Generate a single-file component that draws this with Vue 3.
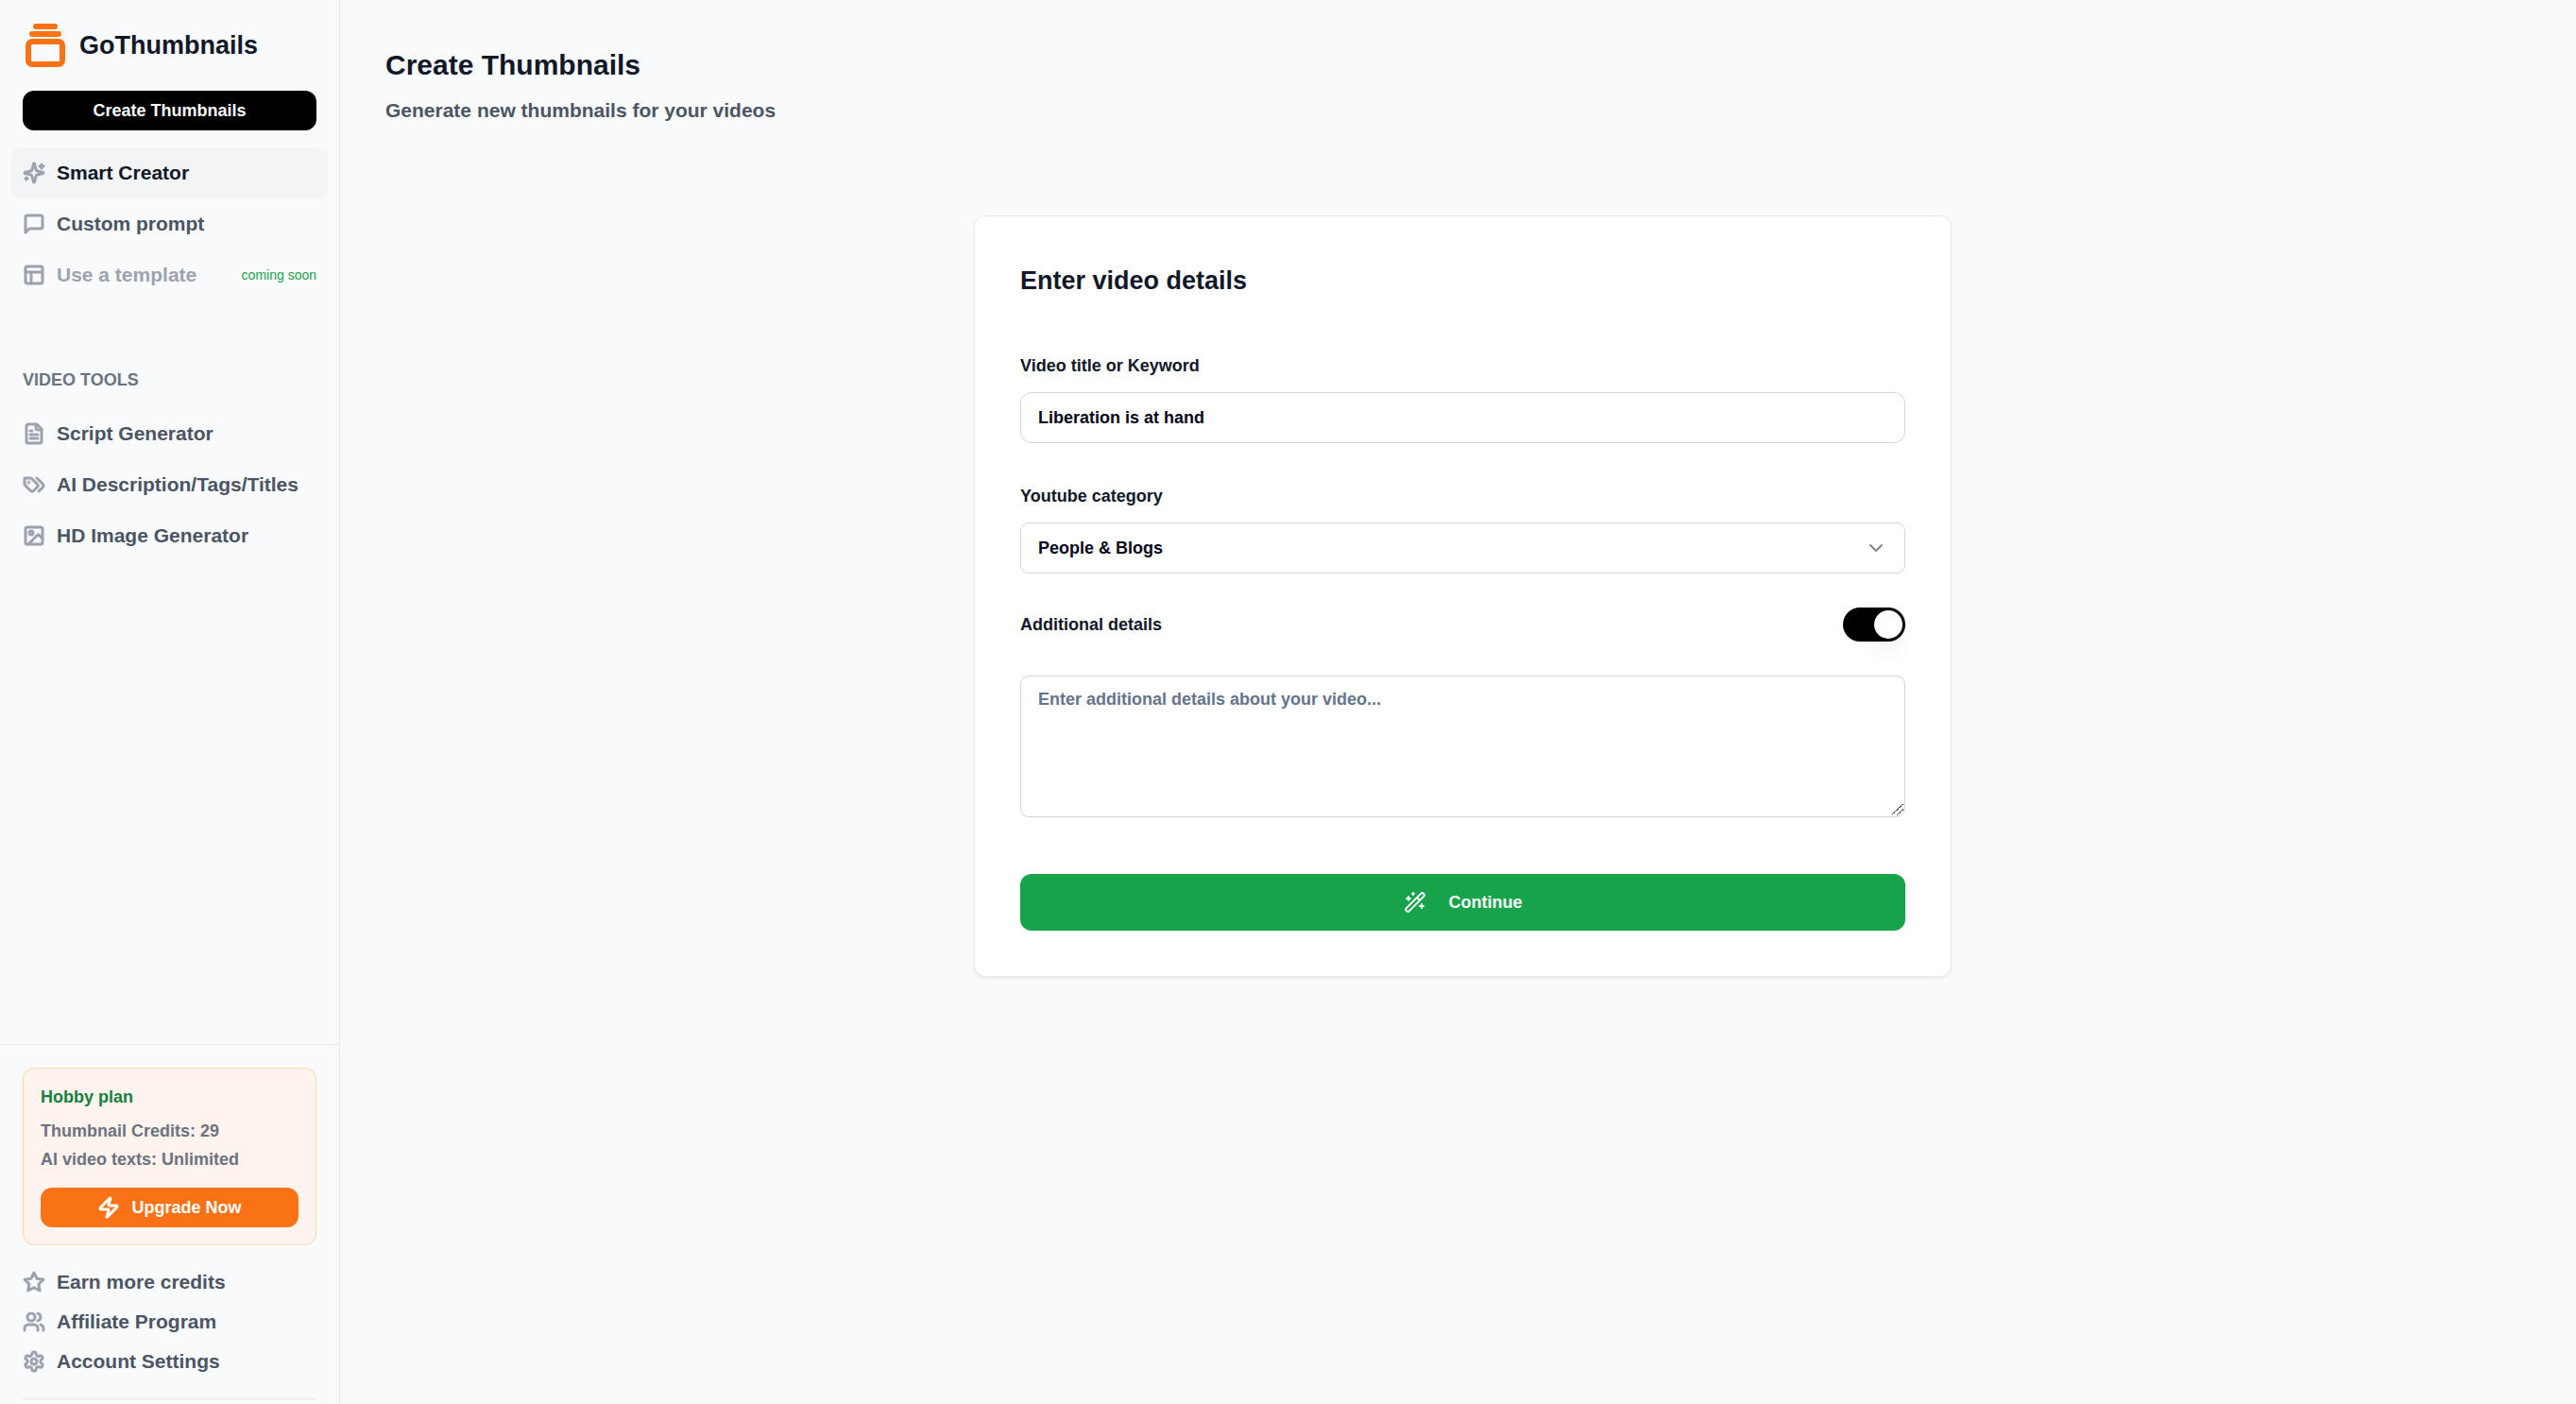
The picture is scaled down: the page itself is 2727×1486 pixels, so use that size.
<script setup>
import { ref } from 'vue'

const icons = {
  sparkles: '<path d="M9.937 15.5A2 2 0 0 0 8.5 14.063l-6.135-1.582a.5.5 0 0 1 0-.962L8.5 9.936A2 2 0 0 0 9.937 8.5l1.582-6.135a.5.5 0 0 1 .963 0L14.063 8.5A2 2 0 0 0 15.5 9.937l6.135 1.581a.5.5 0 0 1 0 .964L15.5 14.063a2 2 0 0 0-1.437 1.437l-1.582 6.135a.5.5 0 0 1-.963 0z"/><path d="M20 3v4M22 5h-4M4 17v2M5 18H3"/>',
  message: '<path d="M21 15a2 2 0 0 1-2 2H7l-4 4V5a2 2 0 0 1 2-2h14a2 2 0 0 1 2 2z"/>',
  layout: '<rect x="3" y="3" width="18" height="18" rx="2"/><path d="M3 9h18M9 21V9"/>',
  file: '<path d="M15 2H6a2 2 0 0 0-2 2v16a2 2 0 0 0 2 2h12a2 2 0 0 0 2-2V7Z"/><path d="M14 2v4a2 2 0 0 0 2 2h4M10 9H8M16 13H8M16 17H8"/>',
  tags: '<path d="m15 5 6.3 6.3a2.4 2.4 0 0 1 0 3.4L17 19"/><path d="M9.586 5.586A2 2 0 0 0 8.172 5H3a1 1 0 0 0-1 1v5.172a2 2 0 0 0 .586 1.414L8.29 18.29a2.426 2.426 0 0 0 3.42 0l3.58-3.58a2.426 2.426 0 0 0 0-3.42z"/><circle cx="6.5" cy="9.5" r=".5" fill="currentColor"/>',
  image: '<rect x="3" y="3" width="18" height="18" rx="2"/><circle cx="9" cy="9" r="2"/><path d="m21 15-3.086-3.086a2 2 0 0 0-2.828 0L6 21"/>',
  star: '<path d="M12 2l3.09 6.26L22 9.27l-5 4.87 1.18 6.88L12 17.77l-6.18 3.25L7 14.14 2 9.27l6.91-1.01L12 2z"/>',
  users: '<path d="M16 21v-2a4 4 0 0 0-4-4H6a4 4 0 0 0-4 4v2"/><circle cx="9" cy="7" r="4"/><path d="M22 21v-2a4 4 0 0 0-3-3.87M16 3.13a4 4 0 0 1 0 7.75"/>',
  settings: '<path d="M12.22 2h-.44a2 2 0 0 0-2 2v.18a2 2 0 0 1-1 1.73l-.43.25a2 2 0 0 1-2 0l-.15-.08a2 2 0 0 0-2.73.73l-.22.38a2 2 0 0 0 .73 2.73l.15.1a2 2 0 0 1 1 1.72v.51a2 2 0 0 1-1 1.74l-.15.09a2 2 0 0 0-.73 2.73l.22.38a2 2 0 0 0 2.73.73l.15-.08a2 2 0 0 1 2 0l.43.25a2 2 0 0 1 1 1.73V20a2 2 0 0 0 2 2h.44a2 2 0 0 0 2-2v-.18a2 2 0 0 1 1-1.73l.43-.25a2 2 0 0 1 2 0l.15.08a2 2 0 0 0 2.73-.73l.22-.39a2 2 0 0 0-.73-2.73l-.15-.08a2 2 0 0 1-1-1.74v-.5a2 2 0 0 1 1-1.74l.15-.09a2 2 0 0 0 .73-2.73l-.22-.38a2 2 0 0 0-2.73-.73l-.15.08a2 2 0 0 1-2 0l-.43-.25a2 2 0 0 1-1-1.73V4a2 2 0 0 0-2-2z"/><circle cx="12" cy="12" r="3"/>',
}

const createLinks = [
  { label: 'Smart Creator', icon: 'sparkles', active: true },
  { label: 'Custom prompt', icon: 'message' },
  { label: 'Use a template', icon: 'layout', muted: true, note: 'coming soon' },
]
const toolLinks = [
  { label: 'Script Generator', icon: 'file' },
  { label: 'AI Description/Tags/Titles', icon: 'tags' },
  { label: 'HD Image Generator', icon: 'image' },
]
const accountLinks = [
  { label: 'Earn more credits', icon: 'star' },
  { label: 'Affiliate Program', icon: 'users' },
  { label: 'Account Settings', icon: 'settings' },
]

const title = ref('Liberation is at hand')
const category = ref('People & Blogs')
const categories = ['People & Blogs', 'Education', 'Entertainment', 'Gaming', 'Music']
const withDetails = ref(true)
const details = ref('')
</script>

<template>
  <div class="app">
    <aside class="sidebar">
      <a class="brand" href="#">
        <svg class="brand-mark" viewBox="0 0 24 24" aria-hidden="true">
          <path d="M7 2h10M5 6h14" />
          <rect x="3" y="10" width="18" height="12" rx="2" />
        </svg>
        <span>GoThumbnails</span>
      </a>
      <button class="btn btn-dark" type="button">Create Thumbnails</button>

      <nav class="nav">
        <a
          v-for="link in createLinks"
          :key="link.label"
          href="#"
          class="nav-link"
          :class="{ active: link.active, muted: link.muted }"
        >
          <svg class="icon" viewBox="0 0 24 24" aria-hidden="true" v-html="icons[link.icon]"></svg>
          <span>{{ link.label }}</span>
          <small v-if="link.note" class="note">{{ link.note }}</small>
        </a>
      </nav>

      <h2 class="nav-title">VIDEO TOOLS</h2>
      <nav class="nav nav-tools">
        <a v-for="link in toolLinks" :key="link.label" href="#" class="nav-link">
          <svg class="icon" viewBox="0 0 24 24" aria-hidden="true" v-html="icons[link.icon]"></svg>
          <span>{{ link.label }}</span>
        </a>
      </nav>

      <div class="sidebar-footer">
        <section class="plan">
          <h3 class="plan-name">Hobby plan</h3>
          <p class="plan-line">Thumbnail Credits: 29</p>
          <p class="plan-line">AI video texts: Unlimited</p>
          <button class="btn btn-upgrade" type="button">
            <svg class="icon" viewBox="0 0 24 24" aria-hidden="true">
              <path d="M4 14a1 1 0 0 1-.78-1.63l9.9-10.2a.5.5 0 0 1 .86.46l-1.92 6.02A1 1 0 0 0 13 10h7a1 1 0 0 1 .78 1.63l-9.9 10.2a.5.5 0 0 1-.86-.46l1.92-6.02A1 1 0 0 0 11 14z" />
            </svg>
            <span>Upgrade Now</span>
          </button>
        </section>
        <nav class="account">
          <a v-for="link in accountLinks" :key="link.label" href="#" class="account-link">
            <svg class="icon" viewBox="0 0 24 24" aria-hidden="true" v-html="icons[link.icon]"></svg>
            <span>{{ link.label }}</span>
          </a>
        </nav>
        <hr class="rule" />
      </div>
    </aside>

    <main class="main">
      <header class="page-head">
        <h1>Create Thumbnails</h1>
        <p>Generate new thumbnails for your videos</p>
      </header>

      <form class="card" @submit.prevent>
        <h2 class="card-title">Enter video details</h2>

        <div class="field">
          <label for="video-title">Video title or Keyword</label>
          <input id="video-title" v-model="title" class="control" type="text" />
        </div>

        <div class="field">
          <label for="category">Youtube category</label>
          <div class="select-wrap">
            <select id="category" v-model="category" class="control">
              <option v-for="c in categories" :key="c">{{ c }}</option>
            </select>
            <svg class="chevron" viewBox="0 0 24 24" aria-hidden="true"><path d="m6 9 6 6 6-6" /></svg>
          </div>
        </div>

        <div class="toggle-row">
          <label for="with-details">Additional details</label>
          <input id="with-details" v-model="withDetails" class="switch" type="checkbox" role="switch" />
        </div>

        <textarea
          v-if="withDetails"
          v-model="details"
          class="control details"
          aria-label="Additional details"
          placeholder="Enter additional details about your video..."
        ></textarea>

        <button class="btn btn-continue" type="submit">
          <svg class="icon" viewBox="0 0 24 24" aria-hidden="true">
            <path d="m21.64 3.64-1.28-1.28a1.21 1.21 0 0 0-1.72 0L2.36 18.64a1.21 1.21 0 0 0 0 1.72l1.28 1.28a1.2 1.2 0 0 0 1.72 0L21.64 5.36a1.2 1.2 0 0 0 0-1.72Z" />
            <path d="m14 7 3 3M5 6v4M19 14v4M10 2v2M7 8H3M21 16h-4M11 3H9" />
          </svg>
          <span>Continue</span>
        </button>
      </form>
    </main>
  </div>
</template>

<style>
body {
  margin: 0;
  background: #f9fafc;
}
</style>

<style scoped>
*,
*::before,
*::after {
  box-sizing: border-box;
}

h1, h2, h3, p {
  margin: 0;
}

.app {
  display: flex;
  min-height: 100vh;
  font: bold 18px/28px "Liberation Sans", Arial, sans-serif;
  color: #111827;
  background: #f9fafc;
}

a {
  color: inherit;
  text-decoration: none;
}

svg {
  flex: none;
  fill: none;
  stroke: currentColor;
  stroke-linecap: round;
  stroke-linejoin: round;
}

.icon {
  width: 24px;
  height: 24px;
  stroke-width: 3;
}

.btn {
  display: flex;
  align-items: center;
  justify-content: center;
  height: 42px;
  padding: 0;
  border: 0;
  border-radius: 12px;
  font: inherit;
  color: #fff;
}

/* Sidebar */
.sidebar {
  display: flex;
  flex: none;
  flex-direction: column;
  width: 360px;
  border-right: 1px solid #e5e7eb;
}

.brand {
  display: flex;
  align-items: center;
  gap: 12px;
  margin: 24px 24px 0;
  font-size: 27px;
}

.brand-mark {
  width: 48px;
  height: 48px;
  color: #f97316;
  stroke-width: 3;
}

.btn-dark {
  margin: 24px 24px 18px;
  background: #000;
}

.nav {
  padding: 0 12px;
}

.nav-link {
  display: flex;
  align-items: center;
  gap: 12px;
  height: 54px;
  padding: 0 12px;
  border-radius: 9px;
  font-size: 21px;
  color: #4b5563;
}

.nav-link .icon,
.account-link .icon {
  color: #9ca3af;
}

.nav-link.active {
  color: #111827;
  background: #f3f4f6;
}

.nav-link.muted {
  color: #9ca3af;
}

.note {
  margin-left: auto;
  font-size: 14px;
  font-weight: normal;
  color: #16a34a;
}

.nav-title {
  margin: 70px 24px 0;
  font-size: 18px;
  color: #6b7280;
}

.nav-tools {
  margin-top: 16px;
}

.sidebar-footer {
  margin-top: auto;
  padding: 24px 24px 5px;
  border-top: 1px solid #e5e7eb;
}

.plan {
  padding: 18px;
  border: 1px solid #fed7aa;
  border-radius: 12px;
  background: #fff3ed;
}

.plan-name {
  margin-bottom: 9px;
  font-size: 18px;
  line-height: 24px;
  color: #15803d;
}

.plan-line {
  line-height: 30px;
  color: #6b7280;
}

.btn-upgrade {
  gap: 12px;
  width: 100%;
  margin-top: 15px;
  background: #f97316;
}

.account {
  margin: 18px 0;
}

.account-link {
  display: flex;
  align-items: center;
  gap: 12px;
  height: 42px;
  font-size: 21px;
  color: #4b5563;
}

.rule {
  height: 1px;
  margin: 0;
  border: 0;
  background: #e5e7eb;
}

/* Page */
.main {
  flex: 1;
  min-width: 0;
  padding: 48px 38px 48px 48px;
}

.page-head h1 {
  font-size: 30px;
  line-height: 42px;
}

.page-head p {
  margin-top: 12px;
  font-size: 21px;
  line-height: 30px;
  color: #4b5563;
}

.card {
  max-width: 1035px;
  margin: 96px auto 0;
  padding: 48px;
  border: 1px solid #e5e7eb;
  border-radius: 12px;
  background: #fff;
  box-shadow: 0 2px 3px rgba(0, 0, 0, 0.05);
}

.card-title {
  margin-bottom: 56px;
  font-size: 27px;
  line-height: 40px;
}

.field {
  display: flex;
  flex-direction: column;
  gap: 14px;
}

.field + .field {
  margin-top: 42px;
}

.control {
  display: block;
  width: 100%;
  height: 54px;
  margin: 0;
  padding: 0 18px;
  border: 1px solid #d1d5db;
  border-radius: 12px;
  font: inherit;
  color: #020617;
  background: #fff;
}

.select-wrap {
  position: relative;
}

select.control {
  appearance: none;
  border-radius: 9px;
}

.chevron {
  position: absolute;
  top: 15px;
  right: 19px;
  width: 24px;
  height: 24px;
  color: #80828b;
  stroke-width: 2;
  pointer-events: none;
}

.toggle-row {
  display: flex;
  align-items: center;
  justify-content: space-between;
  margin: 36px 0;
}

.switch {
  appearance: none;
  display: flex;
  justify-content: flex-start;
  width: 66px;
  height: 36px;
  margin: 0;
  padding: 3px;
  border-radius: 18px;
  background: #d1d5db;
}

.switch:checked {
  justify-content: flex-end;
  background: #000;
}

.switch::before {
  content: "";
  width: 30px;
  height: 30px;
  border-radius: 50%;
  background: #fff;
  box-shadow: 0 15px 22px -4px rgba(0, 0, 0, 0.1);
}

.details {
  height: 150px;
  padding: 10px 18px;
  border-radius: 9px;
  resize: vertical;
}

.details::placeholder {
  color: #64748b;
  opacity: 1;
}

/* Two diagonal grip lines */
.details::-webkit-resizer {
  background: linear-gradient(
      135deg,
      transparent 43%,
      #555 43%,
      #555 50%,
      transparent 50%,
      transparent 68%,
      #555 68%,
      #555 75%,
      transparent 75%
    )
    2px 2px / 12px 12px no-repeat;
}

.btn-continue {
  gap: 24px;
  width: 100%;
  height: 60px;
  margin-top: 60px;
  background: #16a34a;
}

.btn-continue .icon {
  stroke-width: 2;
}
</style>
